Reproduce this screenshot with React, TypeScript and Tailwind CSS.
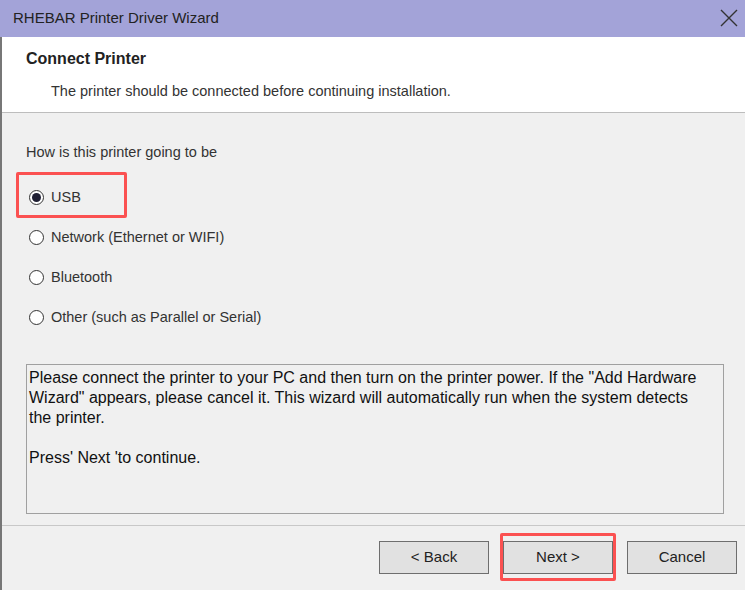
import React from "react";

const options = [
  "USB",
  "Network (Ethernet or WIFI)",
  "Bluetooth",
  "Other (such as Parallel or Serial)",
];

function Radio({ checked }: { checked?: boolean }) {
  return (
    <span className="flex h-[15px] w-[15px] shrink-0 items-center justify-center rounded-full border border-[#333] bg-white">
      {checked && <span className="h-[9px] w-[9px] rounded-full bg-[#1f1f33]" />}
    </span>
  );
}

function WinButton({ label }: { label: string }) {
  return (
    <button className="flex h-[33px] w-[110px] items-center justify-center border border-[#6e6e6e] bg-[#e1e1e1] text-[15px] text-[#222]">
      {label}
    </button>
  );
}

export default function App() {
  return (
    <div
      className="flex h-[590px] w-[745px] flex-col overflow-hidden bg-[#f0f0f0]"
      style={{ fontFamily: '"Liberation Sans", Arial, sans-serif' }}
    >
      <div className="flex h-[37px] shrink-0 items-center justify-between bg-[#a3a3d8] pl-[13px] pr-[6px]">
        <span className="text-[15px] text-[#222]">RHEBAR Printer Driver Wizard</span>
        <svg width="20" height="20" viewBox="0 0 20 20" className="mt-[-1px]">
          <path d="M2 2 L18 18 M18 2 L2 18" stroke="#333" strokeWidth="1.4" fill="none" />
        </svg>
      </div>

      <div className="flex flex-1 flex-col border-l-2 border-[#777]">
        <div className="h-[76px] shrink-0 border-b border-[#bdbdbd] bg-white pl-[24px]">
          <div className="pt-[10px] text-[16px] font-bold text-[#222]">Connect Printer</div>
          <div className="mt-[10px] pl-[25px] text-[14.5px] text-[#333]">
            The printer should be connected before continuing installation.
          </div>
        </div>

        <div className="flex flex-1 flex-col pl-[24px]">
          <div className="pt-[29px] text-[14.5px] text-[#333]">How is this printer going to be</div>
          <div className="mt-[26px] flex flex-col gap-[24px]">
            {options.map((o, i) => (
              <div key={o} className="relative flex h-[16px] items-center gap-[7px] pl-[3px] text-[14.5px] text-[#333]">
                <Radio checked={i === 0} />
                <span>{o}</span>
                {i === 0 && (
                  <span className="absolute left-[-10px] top-[-18px] h-[46px] w-[111px] rounded-[2px] border-[3px] border-[#fb5151]" />
                )}
              </div>
            ))}
          </div>

          <div className="mt-[38px] h-[150px] w-[698px] border border-[#a0a0a0] px-[2px] pt-[3px] text-[16px] leading-[20px] text-[#111]">
            <p>
              Please connect the printer to your PC and then turn on the printer power. If the "Add Hardware
              <br />
              Wizard" appears, please cancel it. This wizard will automatically run when the system detects
              <br />
              the printer.
            </p>
            <p className="mt-[20px]">Press' Next 'to continue.</p>
          </div>
        </div>

        <div className="mt-[11px] flex h-[66px] shrink-0 items-start justify-end gap-[14px] border-t border-[#c8c8c8] pr-[8px] pt-[15px]">
          <WinButton label="< Back" />
          <div className="relative">
            <WinButton label="Next >" />
            <span className="absolute left-[-3px] top-[-8px] h-[48px] w-[116px] rounded-[2px] border-[3px] border-[#fb5151]" />
          </div>
          <WinButton label="Cancel" />
        </div>
      </div>
    </div>
  );
}
